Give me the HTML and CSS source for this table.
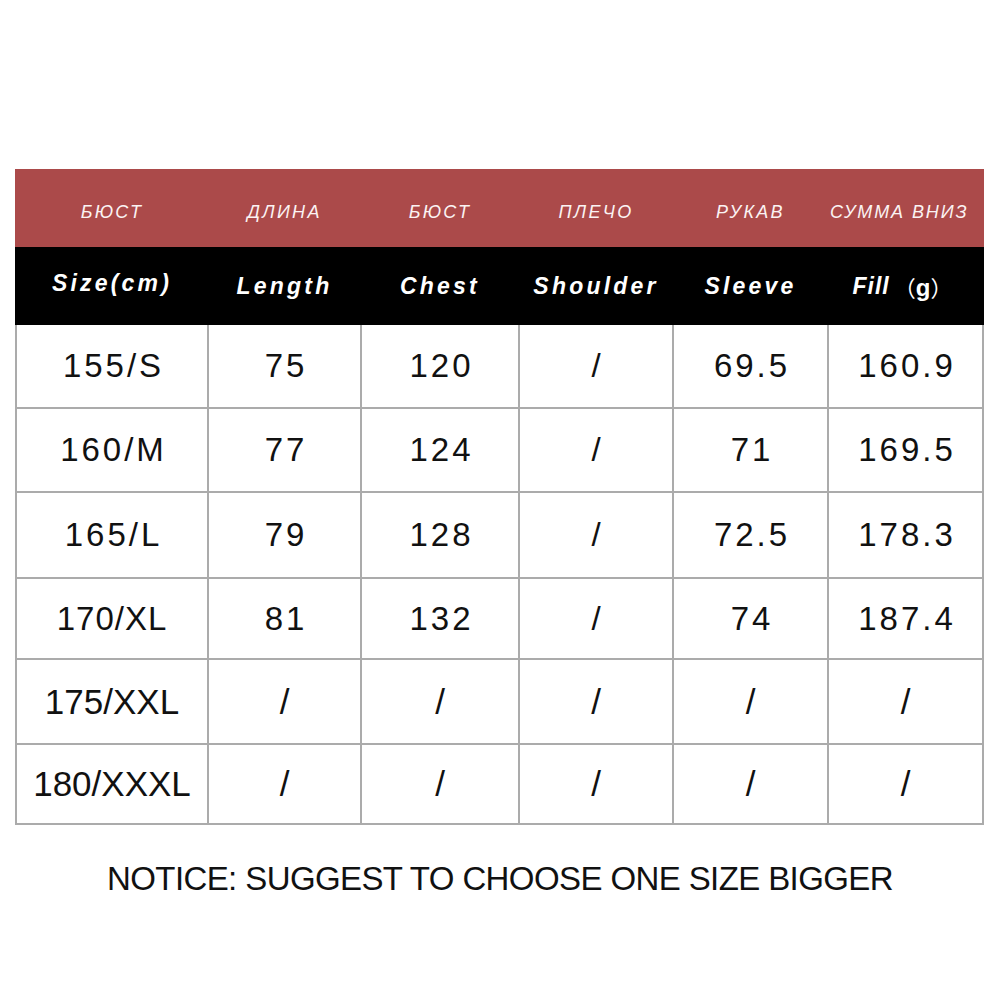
FILE: index.html
```html
<!DOCTYPE html>
<html>
<head>
<meta charset="utf-8">
<link rel="stylesheet" href="styles.css">
</head>
<body>
<div class="chart">
  <div class="band band-ru">
    <div class="hcell">БЮСТ</div>
    <div class="hcell">ДЛИНА</div>
    <div class="hcell">БЮСТ</div>
    <div class="hcell">ПЛЕЧО</div>
    <div class="hcell">РУКАВ</div>
    <div class="hcell">СУММА ВНИЗ</div>
  </div>
  <div class="band band-en">
    <div class="hcell size-head">Size(cm)</div>
    <div class="hcell">Length</div>
    <div class="hcell">Chest</div>
    <div class="hcell">Shoulder</div>
    <div class="hcell">Sleeve</div>
    <div class="hcell">Fill<span class="paren"><span class="fw">（</span>g<span class="fw">）</span></span></div>
  </div>
  <div class="grid">
    <div class="cell sp r1">155/S</div><div class="cell sp r1">75</div><div class="cell sp r1">120</div><div class="cell r1">/</div><div class="cell sp r1">69.5</div><div class="cell sp r1">160.9</div>
    <div class="cell sp r2">160/M</div><div class="cell sp r2">77</div><div class="cell sp r2">124</div><div class="cell r2">/</div><div class="cell sp r2">71</div><div class="cell sp r2">169.5</div>
    <div class="cell sp r3">165/L</div><div class="cell sp r3">79</div><div class="cell sp r3">128</div><div class="cell r3">/</div><div class="cell sp r3">72.5</div><div class="cell sp r3">178.3</div>
    <div class="cell sp-small r4">170/XL</div><div class="cell sp r4">81</div><div class="cell sp r4">132</div><div class="cell r4">/</div><div class="cell sp r4">74</div><div class="cell sp r4">187.4</div>
    <div class="cell big r5">175/XXL</div><div class="cell big r5">/</div><div class="cell big r5">/</div><div class="cell big r5">/</div><div class="cell big r5">/</div><div class="cell big r5">/</div>
    <div class="cell big r6">180/XXXL</div><div class="cell big r6">/</div><div class="cell big r6">/</div><div class="cell big r6">/</div><div class="cell big r6">/</div><div class="cell big r6">/</div>
  </div>
</div>
<p class="notice">NOTICE: SUGGEST TO CHOOSE ONE SIZE BIGGER</p>
</body>
</html>
```
FILE: styles.css
```css
html, body {
  margin: 0;
  padding: 0;
  background: #ffffff;
}

body {
  font-family: "Liberation Sans", Arial, sans-serif;
  width: 1000px;
  height: 1000px;
}

.chart {
  margin-left: 15px;
  padding-top: 169px;
  width: 969px;
}

.band {
  display: grid;
  grid-template-columns: 190px 151px 156px 152px 153px 153px;
  column-gap: 2px;
  padding: 0 2px;
  height: 78px;
}

.band-ru {
  background: #ab4a4a;
  color: #fbf3f3;
}

.band-en {
  background: #000000;
  color: #ffffff;
}

.hcell {
  display: flex;
  align-items: center;
  justify-content: center;
  white-space: nowrap;
  font-style: italic;
}

.band-ru .hcell {
  font-size: 18px;
  letter-spacing: 2.3px;
  padding-top: 9px;
  box-sizing: border-box;
}

.band-ru .hcell:last-child {
  letter-spacing: 1.9px;
  justify-content: flex-start;
  padding-left: 1px;
}

.band-en .hcell {
  font-size: 23px;
  font-weight: bold;
  letter-spacing: 3.2px;
}

.band-en .size-head {
  padding-bottom: 6px;
  box-sizing: border-box;
}

.band-en .hcell:last-child {
  letter-spacing: 1px;
  padding-right: 6px;
  box-sizing: border-box;
}

.paren {
  font-style: normal;
  font-weight: bold;
  font-size: 24px;
  letter-spacing: 0;
  margin-left: 4px;
}

.fw {
  font-family: "Noto Sans CJK SC", "Liberation Sans", sans-serif;
  font-weight: normal;
  font-size: 22px;
}

.grid {
  display: grid;
  grid-template-columns: 190px 151px 156px 152px 153px 153px;
  grid-template-rows: 82px 82px 84px 79px 83px 78px;
  gap: 2px;
  padding: 0 2px 2px 2px;
  background: #ababab;
}

.cell {
  background: #ffffff;
  display: flex;
  align-items: center;
  justify-content: center;
  font-size: 33px;
  color: #111111;
  white-space: nowrap;
}

.cell.sp {
  letter-spacing: 3px;
  text-indent: 3px;
}

.cell.sp-small {
  letter-spacing: 1px;
}

.cell.big {
  font-size: 35px;
}

.notice {
  margin: 34px 0 0 0;
  text-align: center;
  font-size: 33px;
  line-height: 40px;
  letter-spacing: -0.6px;
  color: #111111;
}
```
